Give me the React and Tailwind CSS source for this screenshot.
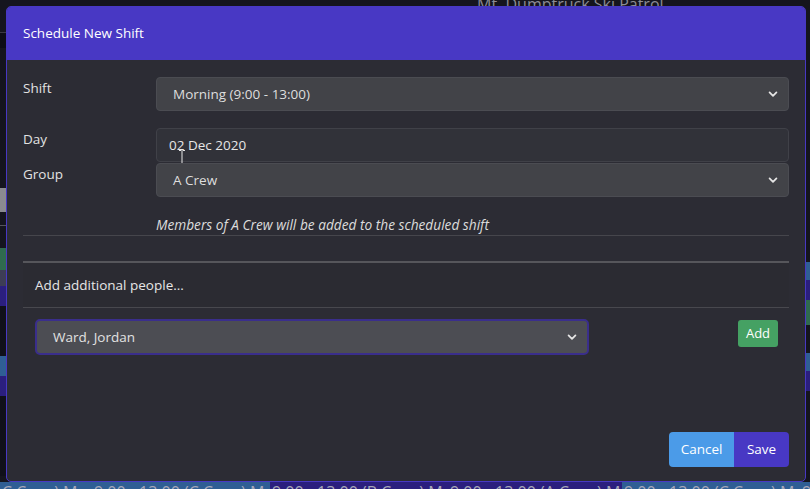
import React from 'react';

const font = { fontFamily: '"Open Sans", "Noto Sans", Arial, sans-serif' };

const Chevron = () => (
  <svg width="10" height="10" viewBox="0 0 16 16" className="pointer-events-none absolute right-[10px] top-1/2 -translate-y-1/2">
    <path d="M2.5 5.5l5.5 5.5 5.5-5.5" fill="none" stroke="#e6e6e6" strokeWidth="2.8" strokeLinecap="round" strokeLinejoin="round" />
  </svg>
);

const SelectBox = ({ value, className = '' }) => (
  <div className={`relative flex h-[34px] flex-1 items-center rounded-[4px] border border-[#4b4c52] bg-[#424348] pl-4 text-[13.5px] text-[#dedede] ${className}`}>
    {value}
    <Chevron />
  </div>
);

const FormRow = ({ label, children }) => (
  <div className="flex">
    <div className="w-[133px] text-[13.5px] leading-[22px] text-[#e2e2e2]">{label}</div>
    {children}
  </div>
);

// background calendar strip, mostly hidden by the modal
const cells = [
  { t: 'C Crew) Mornin', c: 'bg-[#2f5e94]', w: 'w-[92px]' },
  { t: '9:00 - 13:00 (C Crew) Mornin', c: 'bg-[#2f5e94]', w: 'w-[178px]' },
  { t: '9:00 - 13:00 (B Crew) Mornin', c: 'bg-[#2b1f7e]', w: 'w-[178px]' },
  { t: '9:00 - 13:00 (A Crew) Mornin', c: 'bg-[#2b1f7e]', w: 'w-[174px]' },
  { t: '9:00 - 13:00 (C Crew) Mornin', c: 'bg-[#2f5e94]', w: 'w-[178px]' },
  { t: '9:00', c: 'bg-[#2f5e94]', w: 'w-[40px]' },
];

const leftStrip = [
  { h: 'h-[1px]', c: 'bg-[#3a3a44]' },
  { h: 'h-[15px]', c: 'bg-[#0d0d16]' },
  { h: 'h-[140px]', c: 'bg-[#15151e]' },
  { h: 'h-[24px]', c: 'bg-[#8a8a90]' },
  { h: 'h-[13px]', c: 'bg-[#15151e]' },
  { h: 'h-[1px]', c: 'bg-[#55555c]' },
  { h: 'h-[22px]', c: 'bg-[#15151e]' },
  { h: 'h-[22px]', c: 'bg-[#2f6a4f]' },
  { h: 'h-[16px]', c: 'bg-[#3d3d55]' },
  { h: 'h-[20px]', c: 'bg-[#2b1f7e]' },
  { h: 'h-[50px]', c: 'bg-[#10101a]' },
  { h: 'h-[20px]', c: 'bg-[#2f5e94]' },
  { h: 'h-[20px]', c: 'bg-[#2b1f7e]' },
  { h: 'h-[80px]', c: 'bg-[#10101a]' },
];

export default function App() {
  return (
    <div className="relative h-[489px] w-[810px] overflow-hidden bg-[#15151e]" style={font}>
      {/* page behind the dialog */}
      <div className="flex h-full flex-col">
        <div className="flex h-[32px] shrink-0 items-start justify-start pl-[477px]">
          <span className="-mt-[8px] text-[16px] text-[#8c8c94]">Mt. Dumptruck Ski Patrol</span>
        </div>
        <div className="flex flex-1 overflow-hidden">
          <div className="flex w-[8px] flex-col">
            {leftStrip.map((s, i) => (
              <div key={i} className={`${s.h} ${s.c} shrink-0`} />
            ))}
          </div>
          <div className="flex-1" />
          <div className="flex w-[8px] flex-col pt-[230px]">
            <div className="h-[18px] shrink-0 bg-[#2f5e94]" />
            <div className="h-[20px] shrink-0 bg-[#2b1f7e]" />
            <div className="h-[25px] shrink-0 bg-[#2f6a4f]" />
            <div className="h-[28px] shrink-0" />
            <div className="h-[18px] shrink-0 bg-[#2f5e94]" />
            <div className="h-[20px] shrink-0 bg-[#2b1f7e]" />
          </div>
        </div>
        <div className="flex h-[7px] shrink-0 items-start overflow-hidden whitespace-nowrap text-[16px] leading-[20px] text-[#a7a7b8]">
          {cells.map((c, i) => (
            <div key={i} className={`${c.w} ${c.c} h-[7px] shrink-0 overflow-hidden pl-[2px]`}>{c.t}</div>
          ))}
        </div>
      </div>

      {/* dialog */}
      <div className="absolute left-[6px] top-[6px] flex h-[476px] w-[800px] flex-col overflow-hidden rounded-[5px] border border-[#4838c4] bg-[#2c2c34]">
        <div className="flex h-[53px] shrink-0 items-center bg-[#4838c4] px-4">
          <h2 className="text-[13.5px] font-medium text-white">Schedule New Shift</h2>
        </div>

        <div className="flex flex-1 flex-col px-4 pt-[17px] pb-[14px]">
          <FormRow label="Shift">
            <SelectBox value="Morning (9:00 - 13:00)" />
          </FormRow>

          <div className="mt-[17px] flex flex-col gap-[1px]">
            <FormRow label="Day">
              <div className="relative flex h-[34px] flex-1 items-center rounded-[4px] border border-[#404148] bg-[#313239] pl-[12px] text-[13.5px] text-[#e6e6e6]">
                02 Dec 2020
                <svg width="8" height="15" viewBox="0 0 8 15" className="absolute left-[21px] top-[21px]">
                  <path d="M1 0.5h2.5M4.5 0.5H7M4 1v13M1 14.5h2.5M4.5 14.5H7" stroke="#e8e8e8" strokeWidth="1" fill="none" />
                </svg>
              </div>
            </FormRow>
            <FormRow label="Group">
              <SelectBox value="A Crew" />
            </FormRow>
          </div>

          <div className="mt-[18px] pl-[133px] text-[13.7px] italic leading-[20px] text-[#dcdcdc]">
            Members of A Crew will be added to the scheduled shift
          </div>
          <div className="h-[1px] bg-[#46464c]" />

          <div className="mt-[25px] border-t-2 border-b border-t-[#56565b] border-b-[#48484e] bg-[#2b2b32]">
            <div className="flex h-[44px] items-center px-3 text-[13.5px] text-[#e6e6e6]">Add additional people...</div>
          </div>

          <div className="flex items-start justify-between pl-3 pr-[11px] pt-[11px]">
            <div className="relative flex h-[36px] w-[554px] items-center rounded-[5px] border-2 border-[#3a2e8c] bg-[#4c4d53] pl-4 text-[13.5px] text-[#e2e2e2]">
              Ward, Jordan
              <Chevron />
            </div>
            <button className="mt-[1px] h-[27px] w-[40px] rounded-[3px] bg-[#45a163] text-[13px] text-white">Add</button>
          </div>

          <div className="mt-auto flex justify-end">
            <div className="flex overflow-hidden rounded-[4px]">
              <button className="h-[35px] w-[65px] bg-[#4b9be8] text-[13.5px] text-white">Cancel</button>
              <button className="h-[35px] w-[55px] bg-[#4838c4] text-[13.5px] text-white">Save</button>
            </div>
          </div>
        </div>
      </div>
    </div>
  );
}
